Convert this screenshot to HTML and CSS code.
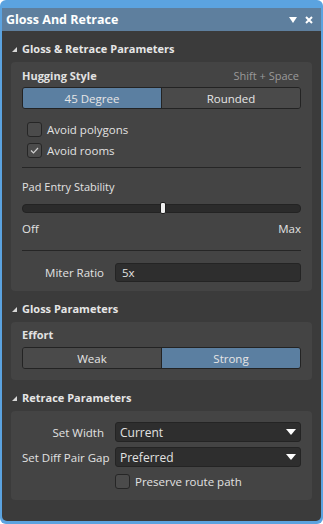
FILE: index.html
```html
<!DOCTYPE html>
<html lang="en">

<head>
    <meta charset="UTF-8">
    <meta name="viewport" content="width=device-width, initial-scale=1.0">
    <title>Gloss And Retrace</title>
    <link rel="stylesheet" href="styles.css">
</head>

<body>
    <div class="window">
        <div class="titlebar">
            <span class="title">Gloss And Retrace</span>
            <div class="title-icons">
                <svg width="8" height="6" viewBox="0 0 8 6"><polygon points="0,0 8,0 4,6" fill="#ffffff" /></svg>
                <svg width="8" height="8" viewBox="0 0 8 8"><path d="M1 1 L7 7 M7 1 L1 7" stroke="#ffffff" stroke-width="2" /></svg>
            </div>
        </div>

        <div class="content">
            <div class="section-head">
                <svg class="caret" width="5" height="5" viewBox="0 0 5 5"><polygon points="5,0 5,5 0,5" fill="#d8d8d8" /></svg>
                Gloss &amp; Retrace Parameters
            </div>
            <div class="panel panel-main">
                <div class="field-head">
                    <span class="label-bold">Hugging Style</span>
                    <span class="shortcut">Shift + Space</span>
                </div>
                <div class="segmented">
                    <button class="seg selected">45 Degree</button>
                    <button class="seg">Rounded</button>
                </div>
                <label class="check check-first"><span class="box"></span>Avoid polygons</label>
                <label class="check"><span class="box">
                        <svg width="9" height="7" viewBox="0 0 9 7"><path d="M1 3.5 L3.5 6 L8 1" stroke="#d0d0d0" stroke-width="1.2" fill="none" /></svg>
                    </span>Avoid rooms</label>
                <div class="divider divider-first"></div>
                <div class="field-label">Pad Entry Stability</div>
                <div class="slider">
                    <div class="track"></div>
                    <div class="thumb"></div>
                </div>
                <div class="range-labels">
                    <span>Off</span>
                    <span>Max</span>
                </div>
                <div class="divider divider-second"></div>
                <div class="form-row miter-row">
                    <span class="row-label">Miter Ratio</span>
                    <div class="input">5x</div>
                </div>
            </div>

            <div class="section-head">
                <svg class="caret" width="5" height="5" viewBox="0 0 5 5"><polygon points="5,0 5,5 0,5" fill="#d8d8d8" /></svg>
                Gloss Parameters
            </div>
            <div class="panel panel-gloss">
                <div class="field-head">
                    <span class="label-bold">Effort</span>
                </div>
                <div class="segmented">
                    <button class="seg">Weak</button>
                    <button class="seg selected">Strong</button>
                </div>
            </div>

            <div class="section-head">
                <svg class="caret" width="5" height="5" viewBox="0 0 5 5"><polygon points="5,0 5,5 0,5" fill="#d8d8d8" /></svg>
                Retrace Parameters
            </div>
            <div class="panel panel-retrace">
                <div class="form-row">
                    <span class="row-label">Set Width</span>
                    <div class="select">Current
                        <svg width="10" height="6" viewBox="0 0 10 6"><polygon points="0,0 10,0 5,6" fill="#ffffff" /></svg>
                    </div>
                </div>
                <div class="form-row second-select">
                    <span class="row-label">Set Diff Pair Gap</span>
                    <div class="select">Preferred
                        <svg width="10" height="6" viewBox="0 0 10 6"><polygon points="0,0 10,0 5,6" fill="#ffffff" /></svg>
                    </div>
                </div>
                <div class="form-row preserve-row">
                    <span></span>
                    <label class="check"><span class="box"></span>Preserve route path</label>
                </div>
            </div>
        </div>
    </div>
</body>

</html>
```

FILE: styles.css
```css
body {
    margin: 0;
    padding: 0;
    background: #ffffff;
    font-family: "Open Sans", "Noto Sans", sans-serif;
    font-size: 11px;
    color: #e2e2e2;
}

.window {
    width: 323px;
    height: 524px;
    box-sizing: border-box;
    background: #5ba3e0;
    border-radius: 6px;
    padding: 8px 2px 3px 2px;
    display: flex;
    flex-direction: column;
}

.titlebar {
    height: 23px;
    background: #5e7f9e;
    display: flex;
    align-items: center;
    justify-content: space-between;
    padding: 0 8px 0 4px;
}

.title {
    font-size: 12.5px;
    font-weight: bold;
    color: #ffffff;
}

.title-icons {
    display: flex;
    align-items: center;
    gap: 8px;
}

.content {
    flex: 1;
    background: #3b3b3b;
    border-radius: 0 0 5px 5px;
    padding: 0 9px;
}

.section-head {
    height: 27px;
    padding-top: 4px;
    display: flex;
    align-items: center;
    gap: 5px;
    font-weight: bold;
    color: #e6e6e6;
    padding-left: 1px;
}

.caret {
    margin-top: 2px;
}

.panel {
    background: #444444;
    border-radius: 4px;
    padding: 0 11px;
}

.panel-main {
    padding-top: 5px;
    padding-bottom: 9px;
}

.panel-gloss {
    padding-top: 4px;
    padding-bottom: 11px;
}

.panel-retrace {
    padding-top: 11px;
    padding-bottom: 8px;
}

.field-head {
    height: 16px;
    display: flex;
    align-items: center;
    justify-content: space-between;
}

.label-bold {
    font-weight: bold;
}

.shortcut {
    color: #9a9a9a;
    margin-right: 2px;
}

.segmented {
    margin-top: 4px;
    height: 22px;
    display: flex;
    border: 1px solid #232323;
    border-radius: 3px;
    box-sizing: border-box;
    overflow: hidden;
}

.panel-gloss .segmented {
    margin-top: 5px;
}

.seg {
    flex: 1;
    border: none;
    background: #4a4a4a;
    color: #e6e6e6;
    font-family: inherit;
    font-size: 11.5px;
    padding: 0;
}

.seg + .seg {
    border-left: 1px solid #232323;
}

.seg.selected {
    background: #5b7fa1;
}

.check {
    height: 21px;
    display: flex;
    align-items: center;
    gap: 5px;
    padding-left: 5px;
    font-size: 11.5px;
}

.check-first {
    margin-top: 10px;
}

.box {
    width: 13px;
    height: 13px;
    border: 1px solid #262626;
    border-radius: 3px;
    background: #4b4b4b;
    display: flex;
    align-items: center;
    justify-content: center;
}

.divider {
    height: 1px;
    background: #262626;
}

.divider-first {
    margin-top: 6px;
}

.divider-second {
    margin-top: 13px;
}

.field-label {
    margin-top: 11px;
    line-height: 16px;
}

.slider {
    margin-top: 6px;
    height: 14px;
    position: relative;
    display: flex;
    align-items: center;
}

.track {
    flex: 1;
    height: 7px;
    background: #2b2b2b;
    border-radius: 4px;
    border: 1px solid #232323;
}

.thumb {
    position: absolute;
    left: 138px;
    top: 1px;
    width: 4px;
    height: 10px;
    background: #eeeeee;
    border: 1px solid #1e1e1e;
    border-radius: 2px;
}

.range-labels {
    margin-top: 6px;
    line-height: 16px;
    display: flex;
    justify-content: space-between;
    font-size: 11.5px;
}

.form-row {
    display: grid;
    grid-template-columns: 82px 1fr;
    column-gap: 11px;
    align-items: center;
    font-size: 11.5px;
}

.miter-row {
    margin-top: 12px;
}

.second-select {
    margin-top: 5px;
}

.preserve-row {
    margin-top: 4px;
}

.preserve-row .check {
    padding-left: 0;
}

.row-label {
    text-align: right;
    white-space: nowrap;
}

.input {
    height: 19px;
    background: #2e2e2e;
    border: 1px solid #242424;
    border-radius: 3px;
    box-sizing: border-box;
    padding: 0 6px;
    display: flex;
    align-items: center;
}

.select {
    height: 20px;
    background: #2e2e2e;
    border: 1px solid #242424;
    border-radius: 3px;
    box-sizing: border-box;
    padding: 0 4px 0 4px;
    display: flex;
    align-items: center;
    justify-content: space-between;
    font-size: 12px;
}
```
